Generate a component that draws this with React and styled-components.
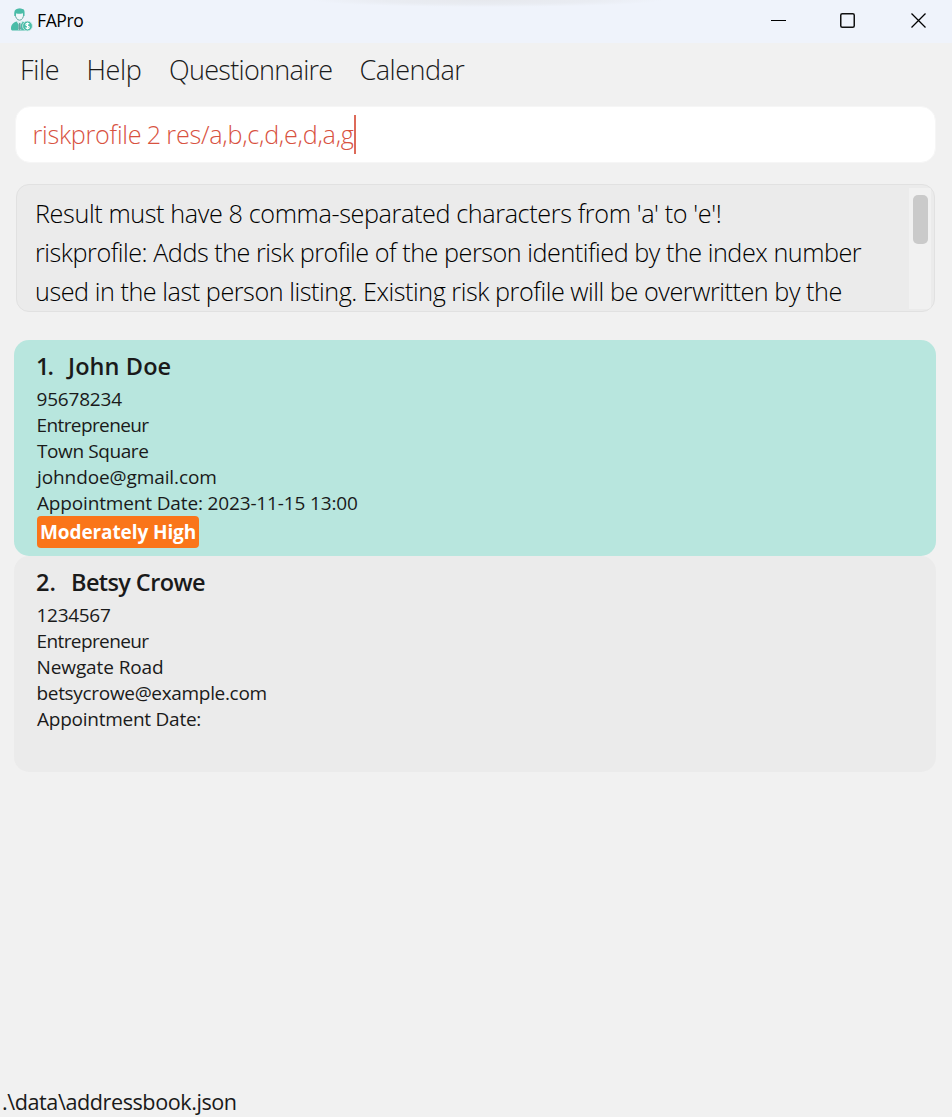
import React from "react";
import styled, { createGlobalStyle } from "styled-components";

const GlobalStyle = createGlobalStyle`
  * { box-sizing: border-box; }
  body {
    margin: 0;
    background: #f1f1f1;
    color: #1a1a1a;
    font-family: "Segoe UI", "Open Sans", "Noto Sans", sans-serif;
  }
`;

const Window = styled.div`
  display: flex;
  flex-direction: column;
  height: 1117px;
  width: 952px;
  overflow: hidden;
  background: #f1f1f1;
`;

const TitleBar = styled.header`
  display: flex;
  align-items: center;
  height: 43px;
  flex: none;
  padding: 0 0 3px 10px;
  background:
    radial-gradient(ellipse 175px 7px at 487px 0, #e6e8ed 0%, #e9ecf2 60%, rgba(239, 243, 251, 0) 100%),
    #eff3fb;
`;

const Title = styled.span`
  flex: 1;
  margin-left: 4px;
  color: #000;
  font-size: 17.5px;
  line-height: 24px;
`;

const Tracked = styled.span`
  letter-spacing: ${(p) => p.$track || 0}px;
  word-spacing: ${(p) => p.$word || 0}px;
  white-space: pre;
`;

const WindowButton = styled.span`
  display: flex;
  align-items: center;
  justify-content: center;
  width: ${(p) => p.$width}px;
  height: 40px;
`;

const MenuBar = styled.nav`
  display: flex;
  flex: none;
  height: 50px;
  padding: 6px 0 0 20px;
  font-size: 27px;
  font-weight: 300;
  line-height: 41px;
`;

const MenuItem = styled.span`
  width: ${(p) => p.$width}px;
  letter-spacing: ${(p) => p.$track || 0}px;
`;

const CommandBox = styled.div`
  display: flex;
  align-items: center;
  flex: none;
  height: 57px;
  margin: 13px 16px 0 15px;
  padding: 0 17px 1px 16.500px;
  border: 1px solid #f6f6f6;
  border-radius: 15px;
  background: #fff;
  color: #d8523f;
  font-size: 25.2px;
  font-weight: 300;
  line-height: 38px;
`;

const Caret = styled.span`
  width: 2px;
  height: 39px;
  background: #dd6a59;
`;

const ResultBox = styled.section`
  display: flex;
  flex: none;
  height: 128px;
  margin: 21px 17px 0 16px;
  overflow: hidden;
  border: 1px solid #e1e1e1;
  border-radius: 13px;
  background: #ebebeb;
`;

const ResultText = styled.div`
  flex: 1;
  height: 126px;
  padding: 9px 0 0 18px;
  overflow: hidden;
  color: #000;
  font-size: 25.2px;
  font-weight: 300;
  line-height: 39px;
`;

const ResultLine = styled.div`
  height: 39px;
  white-space: pre;
  letter-spacing: ${(p) => p.$track}px;
`;

const ScrollTrack = styled.div`
  width: 22px;
  margin: 3px 3px 2px 0;
  padding: 7px 3px 0 4px;
  background: #f1f1f1;
`;

const ScrollThumb = styled.div`
  height: 49px;
  border-radius: 5px;
  background: #cacaca;
`;

const PersonList = styled.main`
  flex: 1;
  margin: 28px 16px 0 14px;
`;

const PersonCard = styled.article`
  height: 216px;
  padding: 10px 22px;
  border-radius: 15px;
  background: ${(p) => (p.$selected ? "#b8e6de" : "#ebebeb")};
  font-size: 19px;
  line-height: 26px;
`;

const Heading = styled.h2`
  display: flex;
  margin: 0 0 4px;
  font-size: 23.5px;
  font-weight: 600;
  line-height: 32px;
`;

const Index = styled.span`
  width: ${(p) => p.$width}px;
  letter-spacing: ${(p) => p.$track}px;
`;

const Field = styled.div`
  height: 26px;
  padding-left: ${(p) => p.$inset || 0}px;
  letter-spacing: ${(p) => p.$track || 0}px;
`;

const RiskTag = styled.span`
  display: inline-block;
  height: 32px;
  width: 162px;
  margin-left: 1px;
  padding-left: 3px;
  border-radius: 4px;
  background: #fa7519;
  color: #fff;
  font-weight: 700;
  line-height: 32px;
  vertical-align: top;
`;

const StatusBar = styled.footer`
  flex: none;
  height: 31px;
  padding: 0 2px;
  font-size: 21.6px;
  line-height: 31px;
`;

function AppLogo() {
  return (
    <svg width="23" height="24" viewBox="0 0 23 24">
      <path d="M1 20.5c0-4 2.600-6.300 6-7l2.500 1.500L12 13.500c3 .5 5 2 5.500 5v4H3c-1.500 0-2-.6-2-2z" fill="#4abca8" />
      <path d="M7.500 12.500l2 2.200 2.200-2.200 1 1.200-2 3 .5 5.300H8.300l.4-5.300-2-3z" fill="#d9eeee" />
      <path d="M9 15h1.300l.7 6-1.300 1.200L8.400 21z" fill="#6b9f9d" />
      <path d="M5.300 5.500c0-3 2-4.300 4.500-4.300 2 0 3 .8 3.800.8v4.500c0 3-1.700 5.700-4 5.700S5.300 9.500 5.300 6.500z" fill="#f1f7fa" stroke="#64aaa0" strokeWidth="1" />
      <path d="M4.300 8V4.500C4.300 2 6.500.5 9.500.5c3 0 5 .8 5 3.500v4h-1.300l-.3-2.800C10 6 7.800 6 6.300 5.200L5.700 8z" fill="#4abca8" />
      <circle cx="17.500" cy="18" r="4.900" fill="#4abca8" stroke="#d5ecea" strokeWidth=".8" />
      <path d="M19.200 16.300c-.4-.7-1-.9-1.700-.9-1 0-1.700.5-1.700 1.200 0 1.800 3.500.9 3.500 2.700 0 .8-.8 1.300-1.800 1.300-.8 0-1.500-.3-1.900-1M17.500 14.500v7" fill="none" stroke="#fff" strokeWidth="1.100" />
    </svg>
  );
}

const menus = [
  { label: "File", width: 66.5, track: -0.3 },
  { label: "Help", width: 82.5, track: -0.4 },
  { label: "Questionnaire", width: 190.5, track: -0.7 },
  { label: "Calendar", width: 120, track: -0.5 },
];

const resultLines = [
  { text: "Result must have 8 comma-separated characters from 'a' to 'e'!", track: -0.38 },
  { text: "riskprofile: Adds the risk profile of the person identified by the index number", track: -0.47 },
  { text: "used in the last person listing. Existing risk profile will be overwritten by the", track: -0.45 },
];

const people = [
  {
    name: "John Doe",
    nameTrack: 0.1,
    indexWidth: 32,
    indexTrack: -2,
    selected: true,
    risk: "Moderately High",
    fields: [
      { text: "95678234", track: -0.2, inset: 0.5 },
      { text: "Entrepreneur", track: -0.6, inset: 0.5 },
      { text: "Town Square", track: -0.4, inset: 1 },
      { text: "johndoe@gmail.com", track: -0.1, inset: 1 },
      { text: "Appointment Date: 2023-11-15 13:00", track: -0.15, inset: 1 },
    ],
  },
  {
    name: "Betsy Crowe",
    nameTrack: -0.6,
    indexWidth: 35,
    indexTrack: 0,
    fields: [
      { text: "1234567", track: -0.3, inset: 0.5 },
      { text: "Entrepreneur", track: -0.6, inset: 0.5 },
      { text: "Newgate Road", track: -0.1, inset: 0.5 },
      { text: "betsycrowe@example.com", track: -0.32, inset: 0.5 },
      { text: "Appointment Date:", track: -0.25, inset: 1 },
    ],
  },
];

function Person({ person, number }) {
  return (
    <PersonCard $selected={person.selected}>
      <Heading>
        <Index $width={person.indexWidth} $track={person.indexTrack}>{number}.</Index>
        <Tracked $track={person.nameTrack}>{person.name}</Tracked>
      </Heading>
      {person.fields.map((f) => (
        <Field key={f.text} $track={f.track} $inset={f.inset}>{f.text}</Field>
      ))}
      {person.risk && (
        <RiskTag>
          <Tracked $track={-0.1}>{person.risk}</Tracked>
        </RiskTag>
      )}
    </PersonCard>
  );
}

export default function App() {
  return (
    <Window>
      <GlobalStyle />
      <TitleBar>
        <AppLogo />
        <Title><Tracked $track={-0.4}>FAPro</Tracked></Title>
        <WindowButton $width={63}>
          <svg width="15" height="15"><path d="M0 7.500h15" stroke="#000" /></svg>
        </WindowButton>
        <WindowButton $width={75}>
          <svg width="15" height="15">
            <rect x=".75" y=".75" width="13.500" height="13.500" rx="1.500" fill="none" stroke="#111" strokeWidth="1.500" />
          </svg>
        </WindowButton>
        <WindowButton $width={67}>
          <svg width="15" height="15"><path d="M.5.500l14 14M14.500.500l-14 14" stroke="#000" strokeWidth="1.300" /></svg>
        </WindowButton>
      </TitleBar>
      <MenuBar>
        {menus.map((m) => (
          <MenuItem key={m.label} $width={m.width} $track={m.track}>{m.label}</MenuItem>
        ))}
      </MenuBar>
      <CommandBox>
        <Tracked $track={-0.27} $word={-0.8}>riskprofile 2 res/a,b,c,d,e,d,a,g</Tracked>
        <Caret />
      </CommandBox>
      <ResultBox>
        <ResultText>
          {resultLines.map((l) => (
            <ResultLine key={l.text} $track={l.track}>{l.text}</ResultLine>
          ))}
        </ResultText>
        <ScrollTrack><ScrollThumb /></ScrollTrack>
      </ResultBox>
      <PersonList>
        {people.map((p, i) => (
          <Person key={p.name} person={p} number={i + 1} />
        ))}
      </PersonList>
      <StatusBar><Tracked $track={-0.43}>{".\\data\\addressbook.json"}</Tracked></StatusBar>
    </Window>
  );
}
